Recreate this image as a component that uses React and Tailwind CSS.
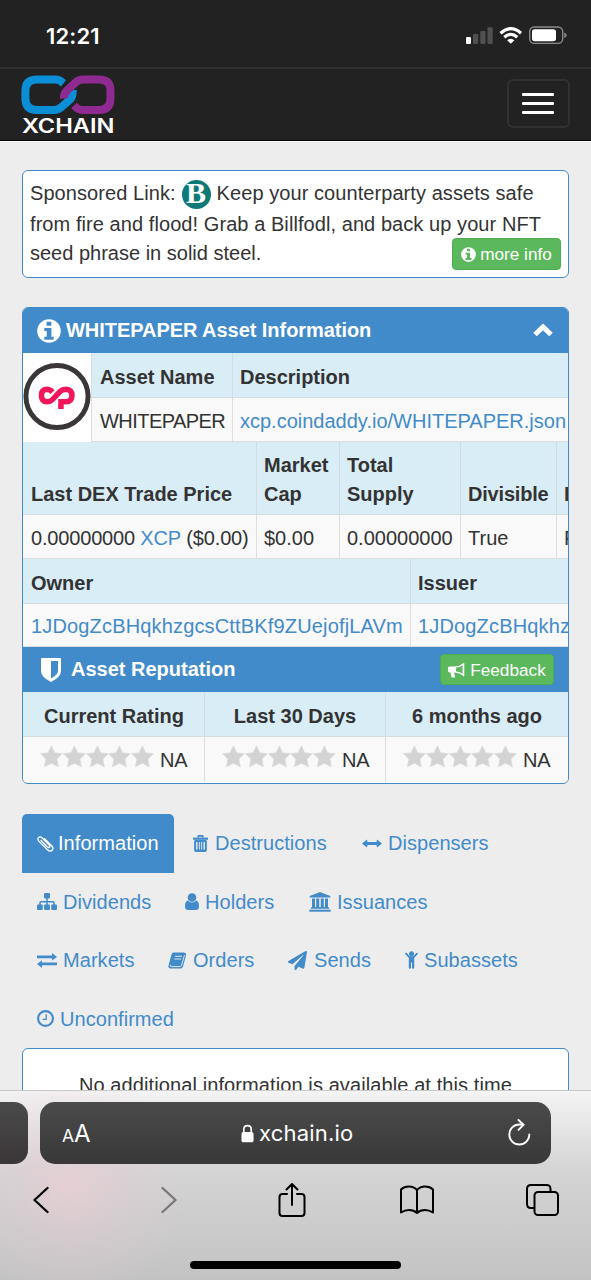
import React from "react";
import { FaPaperPlane } from "react-icons/fa";

const InfoIcon = ({ size }) => (
  <svg width={size} height={size} viewBox="0 0 24 24">
    <path
      fill="#fff"
      fillRule="evenodd"
      d="M12 0.200 A11.800 11.800 0 1 0 12 23.800 A11.800 11.800 0 1 0 12 0.200 Z M9.600 2.800 H14.300 V6.800 H9.600 Z M7.300 9 H14.400 V17.700 H16.700 V20.700 H7.300 V17.700 H9.700 V12 H7.300 Z"
    />
  </svg>
);

const StatusBar = () => {
  return (
    <div className="h-[67px] shrink-0 flex items-center justify-between pl-[46px] pr-[24px] pt-[5px] font-['Inter',sans-serif] text-white">
      <span className="text-[22px] font-semibold tracking-[0.150px]">12:21</span>
      <svg width="101" height="20" viewBox="466 26 101 20">
        <rect x="466" y="37" width="5" height="7" rx="1.2" fill="#fff" />
        <rect x="473" y="34" width="5.2" height="10" rx="1.2" fill="#505050" />
        <rect x="480.3" y="31" width="5.2" height="13" rx="1.2" fill="#505050" />
        <rect x="487.5" y="27.3" width="5.2" height="16.7" rx="1.2" fill="#505050" />
        <g fill="none" stroke="#fff" strokeWidth="3.2">
          <path d="M500.5 33.2 Q510.8 24 521 33.2" />
          <path d="M504.3 37.2 Q510.8 31.4 517.2 37.2" />
        </g>
        <path d="M507.2 40.2 Q510.8 37.2 514.4 40.2 L510.8 43.8 Z" fill="#fff" />
        <rect x="529.7" y="27" width="33" height="16.4" rx="4.6" fill="none" stroke="#8a8a8a" strokeWidth="1.4" />
        <rect x="532" y="29.2" width="24" height="12" rx="2.6" fill="#fff" />
        <path d="M564.3 32.5 Q566.6 33.4 566.6 35.2 Q566.6 37 564.3 38 Z" fill="#8a8a8a" />
      </svg>
    </div>
  );
};

const Navbar = () => {
  return (
    <div className="h-[74px] shrink-0 flex items-start justify-between pl-[21px] pr-[21px] border-t-2 border-[#2f2f2f] border-b border-b-black">
      <div className="w-[94px] pt-[6px]">
        <svg width="94" height="40" viewBox="21 75 94 40" fill="none" strokeWidth="8">
          <path
            stroke="#0a8fd6"
            d="M63.5 83.4 L60 80.6 Q58.4 79.6 55.5 79.6 H37 Q25.4 79.6 25.4 91 V98.600 Q25.400 110 37 110 H54 Q58 110 61.5 107 L69.500 100 Q73 97 72.800 90"
          />
          <path
            stroke="#8f2a90"
            d="M64 98.500 Q63.500 93.500 67.500 90 L75.500 82.500 Q78.700 79.600 83 79.600 H99 Q110.500 79.600 110.500 91 V98.600 Q110.500 110 99 110 H82 Q78.500 110 74 105.500"
          />
        </svg>
        <div className="flex justify-center text-white font-['Inter',sans-serif] text-[19.500px] font-semibold leading-[20px] mt-px whitespace-nowrap">
          <span className="inline-block origin-center scale-x-[1.21]">XCHAIN</span>
        </div>
      </div>
      <button className="mt-[10px] w-[63px] h-[49px] rounded-[6px] border-2 border-[#313131] flex flex-col items-center justify-center gap-[6px] pr-px">
        <span className="w-[32px] h-[3px] rounded-[1px] bg-white"></span>
        <span className="w-[32px] h-[3px] rounded-[1px] bg-white"></span>
        <span className="w-[32px] h-[3px] rounded-[1px] bg-white"></span>
      </button>
    </div>
  );
};

const Sponsored = () => {
  return (
    <div className="relative h-[108px] bg-white border-[1.5px] border-[#428bca] rounded-[6px] pl-[7px] pt-[7px] whitespace-nowrap">
      <div className="h-[31px] flex items-center tracking-[0.070px]">
        <span>Sponsored Link:</span>
        <span className="mx-[6px] mt-[2px] w-[29px] h-[29px] rounded-full bg-[#0d7a77] flex items-center justify-center text-white font-['Liberation_Serif',serif] font-bold text-[30px] leading-none">
          <span className="-mt-[3px]">B</span>
        </span>
        <span>Keep your counterparty assets safe</span>
      </div>
      <p className="h-[29px] leading-[31px] tracking-[0.070px]">
        from fire and flood! Grab a Billfodl, and back up your NFT
      </p>
      <p className="h-[29px] leading-[31px]">seed phrase in solid steel.</p>
      <button className="absolute right-[7px] bottom-[7px] w-[109px] h-[32px] rounded-[4px] bg-[#5cb85c] border border-[#4cae4c] text-white text-[17.200px] flex items-center justify-center gap-[4px]">
        <InfoIcon size={15} />
        more info
      </button>
    </div>
  );
};

const Head = ({ className = "", children }) => (
  <div
    className={`bg-[#d9edf7] border-b border-r border-[#d5dcdf] pl-[7px] first:pl-[8px] pb-[5px] flex items-end font-bold leading-[29px] shrink-0 ${className}`}
  >
    {children}
  </div>
);

const Cell = ({ className = "", children }) => (
  <div
    className={`bg-[#f9f9f9] border-b border-r border-[#ddd] pl-[7px] first:pl-[8px] pt-[3px] flex items-center shrink-0 ${className}`}
  >
    {children}
  </div>
);

const Star = () => (
  <svg width="22.800" height="23" viewBox="0 0 23 23">
    <path
      d="M11.500 0.800 L14.800 7.800 L22.500 8.700 L17 14 L18.500 21.800 L11.500 18.300 L4.500 21.800 L6 14 L0.500 8.700 L8.200 7.800 Z"
      fill="#d3d3d3"
      stroke="#dcdcdc"
      strokeWidth="0.800"
    />
  </svg>
);

const Rating = () => (
  <div className="h-[45px] bg-[#f9f9f9] border-r border-[#ddd] flex items-start pl-[17px] pt-[8px]">
    <Star />
    <Star />
    <Star />
    <Star />
    <Star />
    <span className="ml-[6px] mt-px leading-[28px] tracking-[-0.300px]">NA</span>
  </div>
);

const AssetPanel = () => {
  return (
    <div className="h-[477px] mt-[29px] border-[1.5px] border-[#428bca] rounded-[6px] overflow-hidden whitespace-nowrap bg-white">
      <div className="h-[45px] bg-[#428bca] text-white font-bold flex items-center pl-[14px] pr-[15px]">
        <InfoIcon size={24} />
        <span className="ml-[5px] mr-auto tracking-[-0.050px]">WHITEPAPER Asset Information</span>
        <svg width="20" height="14" viewBox="0 0 20 14" fill="none">
          <path d="M2 10.500 L10 2.900 L18 10.500" stroke="#fff" strokeWidth="5" />
        </svg>
      </div>
      <div className="flex">
        <div className="w-[69px] h-[89px] pb-[2px] shrink-0 border-r border-[#ddd] flex items-center justify-center">
          <svg width="69" height="69" viewBox="23 362.500 69 69" fill="none">
            <circle cx="57.500" cy="397" r="31.500" stroke="#3b3638" strokeWidth="5" />
            <path
              d="M53 392.500 Q50.500 389.700 47 389.700 Q41.700 390 41.700 396 Q41.700 402.300 47.500 402.300 Q51 402.300 53.500 399.500 L60.500 392 Q63 389.700 66.500 389.700 Q72.700 390 72.700 396 Q72.700 402.300 66.500 402.300 H61.500 V409.700"
              stroke="#f2175a"
              strokeWidth="5.600"
            />
          </svg>
        </div>
        <div>
          <div className="flex">
            <Head className="w-[141px] h-[45px]">Asset Name</Head>
            <Head className="w-[400px] h-[45px]">Description</Head>
          </div>
          <div className="flex">
            <Cell className="w-[141px] h-[44px]">
              <span className="tracking-[-0.550px]">WHITEPAPER</span>
            </Cell>
            <Cell className="w-[400px] h-[44px] text-[#428bca]">
              xcp.coindaddy.io/WHITEPAPER.json
            </Cell>
          </div>
        </div>
      </div>
      <div className="flex">
        <Head className="w-[234px] h-[73px]">Last DEX Trade Price</Head>
        <Head className="w-[83px] h-[73px]">
          Market
          <br />
          Cap
        </Head>
        <Head className="w-[121px] h-[73px]">
          Total
          <br />
          Supply
        </Head>
        <Head className="w-[96px] h-[73px] tracking-[-0.200px]">Divisible</Head>
        <Head className="w-[100px] h-[73px]">Locked</Head>
      </div>
      <div className="flex">
        <Cell className="w-[234px] h-[44px] tracking-[-0.170px]">
          0.00000000&nbsp;<span className="text-[#428bca]">XCP</span>&nbsp;($0.00)
        </Cell>
        <Cell className="w-[83px] h-[44px]">$0.00</Cell>
        <Cell className="w-[121px] h-[44px]">0.00000000</Cell>
        <Cell className="w-[96px] h-[44px]">True</Cell>
        <Cell className="w-[100px] h-[44px]">False</Cell>
      </div>
      <div className="flex">
        <Head className="w-[388px] h-[45px]">Owner</Head>
        <Head className="w-[388px] h-[45px]">Issuer</Head>
      </div>
      <div className="flex text-[#428bca] tracking-[0.160px]">
        <Cell className="w-[388px] h-[43px]">1JDogZcBHqkhzgcsCttBKf9ZUejofjLAVm</Cell>
        <Cell className="w-[388px] h-[43px]">1JDogZcBHqkhzgcsCttBKf9ZUejofjLAVm</Cell>
      </div>
      <div className="h-[45px] bg-[#428bca] text-white flex items-center pl-[18px] pr-[14px]">
        <svg width="20" height="24" viewBox="0 0 20 24">
          <path
            fillRule="evenodd"
            fill="#fff"
            d="M0 1 Q0 0 1 0 H19 Q20 0 20 1 V13 Q20 19 10 24 Q0 19 0 13 Z M10 3 V20.500 Q17 16.500 17 13 V3 Z"
          />
        </svg>
        <span className="ml-[10px] mr-auto font-bold">Asset Reputation</span>
        <button className="w-[114px] h-[31px] rounded-[4px] bg-[#5cb85c] border border-[#4cae4c] text-[17.200px] flex items-center justify-center gap-[5px] pt-px">
          <svg width="17" height="15" viewBox="0 0 17 15" fill="none">
            <path d="M7.500 4 Q12 3.800 15.200 1 V12 Q12 9.200 7.500 9" stroke="#fff" strokeWidth="1.300" />
            <path d="M1.500 3.500 H8 V9.500 H6 L7.200 14 Q5.500 15.300 3.600 14.300 L2.500 9.500 H1.500 Q0 9.300 0 8 V5 Q0 3.600 1.500 3.500 Z M15 0.300 H16.300 V12.700 H15 Z" fill="#fff" />
          </svg>
          Feedback
        </button>
      </div>
      <div className="grid grid-cols-[182px_181px_182px] [&>*:nth-child(3n)]:border-r-0">
        <Head className="h-[45px] justify-center pr-[7px]">Current Rating</Head>
        <Head className="h-[45px] justify-center pr-[7px]">Last 30 Days</Head>
        <Head className="h-[45px] justify-center pr-[7px]">6 months ago</Head>
        <Rating />
        <Rating />
        <Rating />
      </div>
    </div>
  );
};

const Paperclip = () => (
  <svg width="17" height="17" viewBox="0 0 17 17" fill="none" stroke="currentColor" strokeWidth="1.300" strokeLinecap="round">
    <path d="M4 5.500 L10.300 12 Q11.700 13 12.500 12.200 Q13.300 11.300 12.200 10 L5.200 3 Q3 1 1.500 2.600 Q0 4.200 2 6.400 L10.500 14.800 Q13.200 17.200 15.100 15.200 Q17 13.200 14.600 10.700 L7.600 3.700" />
  </svg>
);

const Trash = () => (
  <svg width="15" height="17" viewBox="0 0 15 17" fill="none" stroke="currentColor">
    <path d="M4.800 2.500 L5.500 0.900 H9.500 L10.200 2.500" strokeWidth="1.700" />
    <path d="M0 3.700 H15" strokeWidth="2.200" />
    <path d="M2.100 5.500 V15 Q2.100 16 3 16 H12 Q12.900 16 12.900 15 V5.500" strokeWidth="2" />
    <path d="M5.200 6 V15 M9.800 6 V15 M7.500 6 V15" strokeWidth="1.400" />
    <path d="M2 6 H13 M2 15.500 H13" strokeWidth="1.800" />
  </svg>
);

const ArrowsH = () => (
  <svg width="20" height="9" viewBox="0 0 20 9" fill="currentColor">
    <path d="M0 4.500 L4.600 0.800 Q5.300 0.400 5.300 1.400 V3.100 H14.700 V1.400 Q14.700 0.400 15.400 0.800 L20 4.500 L15.400 8.200 Q14.700 8.600 14.700 7.600 V5.900 H5.300 V7.600 Q5.300 8.600 4.600 8.200 Z" />
  </svg>
);

const Sitemap = () => (
  <svg width="20" height="17" viewBox="0 0 20 17" fill="currentColor">
    <rect x="7" y="0" width="6" height="5.500" rx="1" />
    <rect x="0" y="11.500" width="5.800" height="5.500" rx="1" />
    <rect x="7.100" y="11.500" width="5.800" height="5.500" rx="1" />
    <rect x="14.200" y="11.500" width="5.800" height="5.500" rx="1" />
    <path d="M10 5 V12 M3 12 V9.500 Q3 8.700 4 8.700 H16 Q17 8.700 17 9.500 V12" fill="none" stroke="currentColor" strokeWidth="1.500" />
  </svg>
);

const User = () => (
  <svg width="14" height="17" viewBox="0 0 14 17" fill="currentColor">
    <circle cx="7" cy="4.500" r="4.300" />
    <path d="M3 7.500 Q0 8 0 13.600 Q0 17 3 17 H11 Q14 17 14 13.600 Q14 8 11 7.500 Q9.500 9.500 7 9.500 Q4.500 9.500 3 7.500 Z" />
  </svg>
);

const Bank = () => (
  <svg width="22" height="20" viewBox="0 0 22 20" fill="currentColor">
    <path d="M11 0 L21.300 4 V5.500 H0.700 V4 Z" />
    <path d="M3 6.500 H6 V15 H7.200 V6.500 H10.200 V15 H11.800 V6.500 H14.800 V15 H16 V6.500 H19 V15 Q20.300 15.200 20.300 16.800 H1.700 Q1.700 15.200 3 15 Z" />
    <rect x="0.300" y="17.700" width="21.400" height="2" />
  </svg>
);

const Exchange = () => (
  <svg width="20" height="15" viewBox="0 0 20 15" fill="currentColor">
    <path d="M0 2.600 H15 V0 L20 3.900 L15 7.600 V5.200 H0 Z M20 9.600 H5 V7.200 L0 11 L5 15 V12.300 H20 Z" />
  </svg>
);

const Book = () => (
  <svg width="19" height="17" viewBox="0 0 19 17">
    <path d="M5.500 0.500 H16 Q18.600 1 18 3.500 L15 14.500 Q14.500 16.500 12.500 16.500 H2.500 Q0 16.300 0.500 13.500 L3.500 2.500 Q4 0.700 5.500 0.500 Z" fill="currentColor" />
    <path d="M7 4.300 H14 M6.300 7 H13.300 M2.500 12.900 Q1.700 14.600 3.500 14.600 H12.500 Q13.200 14.600 13.500 13.500 L16.500 3" fill="none" stroke="#ededed" strokeWidth="0.900" />
  </svg>
);

const Child = () => (
  <svg width="13" height="18" viewBox="0 0 13 18" fill="none" stroke="currentColor" strokeLinecap="round">
    <circle cx="6.500" cy="2.700" r="2.500" fill="currentColor" stroke="none" />
    <path d="M1.100 2.700 L4.500 6.300 H8.500 L11.900 2.700" strokeWidth="1.900" strokeLinejoin="round" />
    <path d="M4 6 H9 V11.500 H4 Z" fill="currentColor" stroke="none" />
    <path d="M4.900 8 V16.700 M8.100 8 V16.700" strokeWidth="2.200" />
  </svg>
);

const Clock = () => (
  <svg width="17" height="17" viewBox="0 0 17 17" fill="none" stroke="currentColor">
    <circle cx="8.500" cy="8.500" r="7.400" strokeWidth="2.100" />
    <path d="M9.200 4.300 V9.300 H5.600" strokeWidth="1.300" />
  </svg>
);

const tabs = [
  { name: "Information", icon: <Paperclip />, iconWidth: 21, width: 152, active: true },
  { name: "Destructions", icon: <Trash />, iconWidth: 22, width: 165 },
  { name: "Dispensers", icon: <ArrowsH />, iconWidth: 26, width: 160 },
  { name: "Dividends", icon: <Sitemap />, iconWidth: 26, width: 144 },
  { name: "Holders", icon: <User />, iconWidth: 20, width: 120 },
  { name: "Issuances", icon: <Bank />, iconWidth: 28, width: 200 },
  { name: "Markets", icon: <Exchange />, iconWidth: 26, width: 127 },
  { name: "Orders", icon: <Book />, iconWidth: 25, width: 116 },
  { name: "Sends", icon: <FaPaperPlane size={19} />, iconWidth: 26, width: 113 },
  { name: "Subassets", icon: <Child />, iconWidth: 19, width: 140 },
  { name: "Unconfirmed", icon: <Clock />, iconWidth: 23, width: 170 },
];

const Tabs = () => {
  return (
    <div className="mt-[30px] flex flex-wrap gap-x-[4px] text-[#428bca] tracking-[0.050px] whitespace-nowrap">
      {tabs.map((tab) => (
        <a
          key={tab.name}
          style={{ width: tab.width }}
          className={`h-[58.500px] pl-[15px] flex items-center ${
            tab.active ? "bg-[#428bca] text-white rounded-t-[5px]" : ""
          }`}
        >
          <span className="shrink-0" style={{ width: tab.iconWidth }}>
            {tab.icon}
          </span>
          {tab.name}
        </a>
      ))}
    </div>
  );
};

const BrowserBar = () => {
  return (
    <div className="h-[190px] shrink-0 border-t border-[#c9c9c9] bg-[radial-gradient(circle_at_70px_95px,rgba(236,205,212,0.700),rgba(230,204,210,0.350)_50px,rgba(220,204,208,0)_120px),linear-gradient(#f4f4f4,#d4d4d5_42%,#c3c3c4)] font-['Inter',sans-serif]">
      <div className="flex gap-[12px] pt-[11px]">
        <div className="w-[28px] h-[62px] rounded-r-[14px] bg-gradient-to-b from-[#4b4b4b] to-[#3b3637]"></div>
        <div className="w-[511px] h-[62px] rounded-[15px] bg-gradient-to-b from-[#4b4b4b] to-[#383838] text-white flex items-center pl-[22px] pr-[20px]">
          <span className="w-[179px] flex items-baseline pt-[4px]">
            <span className="text-[17.500px]">A</span>
            <span className="text-[24px]">A</span>
          </span>
          <svg width="13" height="19" viewBox="0 0 14 20">
            <path d="M3 9 V5.500 Q3 1.500 7 1.500 Q11 1.500 11 5.500 V9" fill="none" stroke="#fff" strokeWidth="1.800" />
            <rect x="0.500" y="8.500" width="13" height="11" rx="2" fill="#fff" />
          </svg>
          <span className="ml-[5px] mr-auto text-[22px] tracking-[0.200px]">xchain.io</span>
          <svg width="23" height="27" viewBox="0 0 23 27" fill="none" stroke="#fff" strokeWidth="1.900" strokeLinecap="round" className="-mt-[2px]">
            <path d="M14.500 5.500 H11.300 A10 10 0 1 0 21.300 15.500" />
            <path d="M10.500 1 L15.500 5.700 L10.500 10.800" />
          </svg>
        </div>
      </div>
      <div className="flex items-center pl-[32px] h-[72px]">
        <svg width="17" height="28" viewBox="0 0 17 28" fill="none" stroke="#000" strokeWidth="2.300" strokeLinecap="round" strokeLinejoin="round">
          <path d="M15.500 2 L2.500 14 L15.500 26" />
        </svg>
        <svg width="17" height="28" viewBox="0 0 17 28" fill="none" stroke="#7b7578" strokeWidth="2.300" strokeLinecap="round" strokeLinejoin="round" className="ml-[112px]">
          <path d="M1.500 2 L14.500 14 L1.500 26" />
        </svg>
        <svg width="28" height="36" viewBox="0 0 28 36" fill="none" stroke="#000" strokeWidth="2" strokeLinecap="round" strokeLinejoin="round" className="ml-[100px]">
          <path d="M9 12 H4.500 Q1.500 12 1.500 15 V31 Q1.500 34 4.500 34 H23.500 Q26.500 34 26.500 31 V15 Q26.500 12 23.500 12 H19" />
          <path d="M14 23 V2 M8.500 7.500 L14 2 L19.500 7.500" />
        </svg>
        <svg width="34" height="30" viewBox="0 0 34 30" fill="none" stroke="#000" strokeWidth="2" strokeLinejoin="round" className="ml-[94px]">
          <path d="M17 5 Q14 1.500 9 1.500 Q4 1.500 1 4.500 V27.500 Q5 25 9 25 Q14 25 17 28 Q20 25 25 25 Q29 25 33 27.500 V4.500 Q30 1.500 25 1.500 Q20 1.500 17 5 V28" />
        </svg>
        <svg width="33" height="32" viewBox="0 0 33 32" fill="none" stroke="#000" strokeWidth="2" strokeLinejoin="round" className="ml-[92px]">
          <path d="M8 24 H5 Q1 24 1 20 V5 Q1 1 5 1 H20.500 Q24.500 1 24.500 5 V8" />
          <rect x="8.500" y="8" width="23.500" height="23" rx="3.500" />
        </svg>
      </div>
      <div className="mx-auto mt-[25px] w-[211px] h-[8px] rounded-full bg-black"></div>
    </div>
  );
};

const App = () => {
  return (
    <div className="w-[591px] h-[1280px] overflow-hidden flex flex-col bg-[#222] text-[20px] text-[#333] leading-[28.500px] font-['Liberation_Sans',Arial,sans-serif]">
      <StatusBar />
      <Navbar />
      <div className="flex-1 min-h-0 overflow-hidden bg-[#ededed] border-t border-white pt-[28px] pl-[22px] pr-[22px]">
        <Sponsored />
        <AssetPanel />
        <Tabs />
        <div className="h-[80px] border-[1.5px] border-[#428bca] rounded-[6px] bg-white text-center pt-[22px] tracking-[0.100px] whitespace-nowrap">
          No additional information is available at this time
        </div>
      </div>
      <BrowserBar />
    </div>
  );
};

export default App;
